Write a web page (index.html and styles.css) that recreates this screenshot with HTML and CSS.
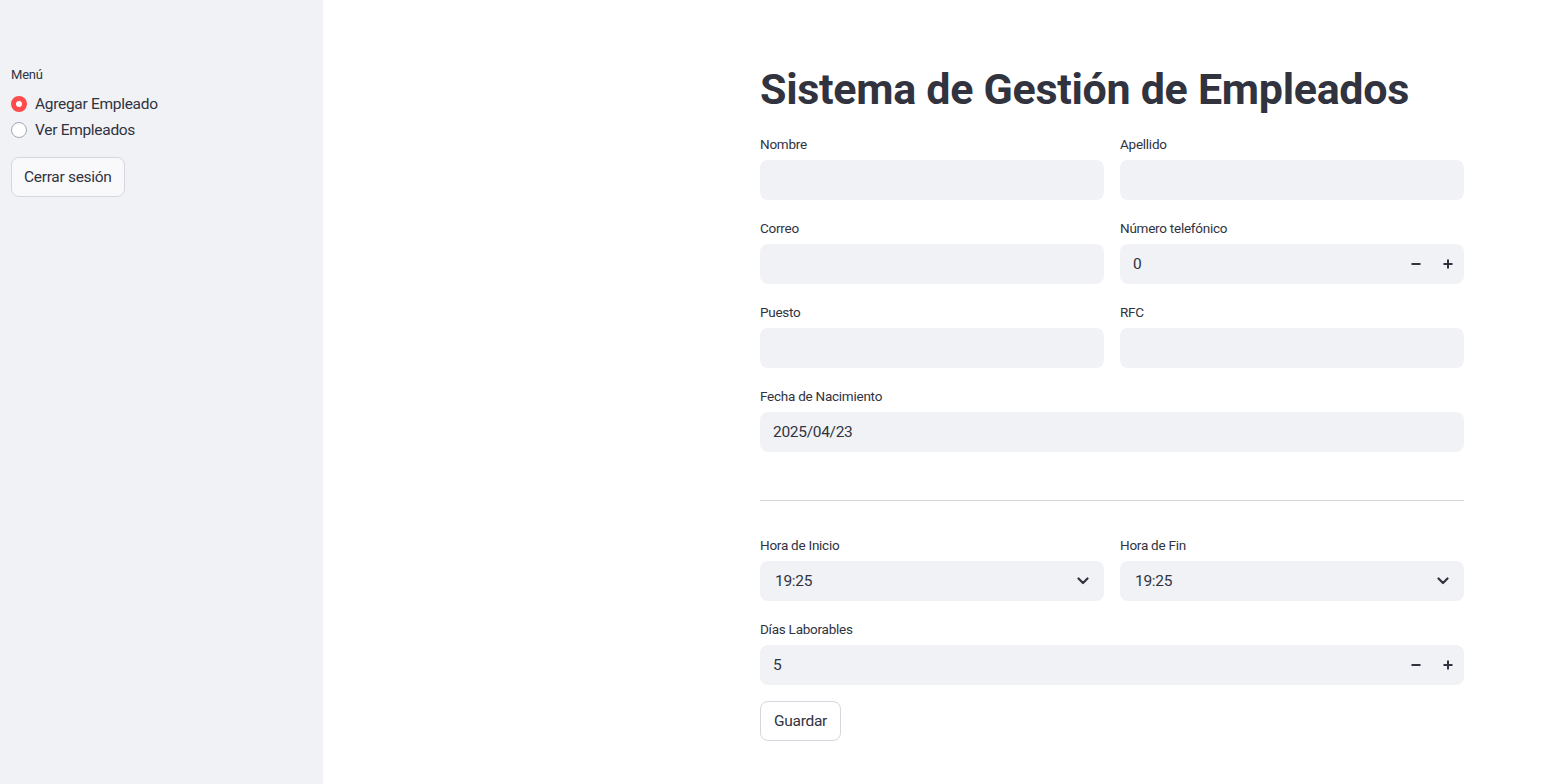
FILE: index.html
```html
<!DOCTYPE html>
<html lang="es">
<head>
<meta charset="utf-8">
<title>Sistema de Gestión de Empleados</title>
<link rel="stylesheet" href="styles.css">
</head>
<body>
<div class="app">
  <aside class="sidebar">
    <div class="side-label">Menú</div>
    <div class="radio-group">
      <div class="radio"><span class="dot on"></span><span>Agregar Empleado</span></div>
      <div class="radio"><span class="dot"></span><span>Ver Empleados</span></div>
    </div>
    <button class="btn side-btn">Cerrar sesión</button>
  </aside>
  <main class="main">
    <div class="content">
      <h1 class="title">Sistema de Gestión de Empleados</h1>
      <div class="row two">
        <div class="field"><label class="lbl">Nombre</label><div class="input"></div></div>
        <div class="field"><label class="lbl">Apellido</label><div class="input"></div></div>
      </div>
      <div class="row two">
        <div class="field"><label class="lbl">Correo</label><div class="input"></div></div>
        <div class="field"><label class="lbl">Número telefónico</label>
          <div class="input num"><span class="val">0</span><span class="step">
            <svg width="10" height="10" viewBox="0 0 10 10"><rect x="0.5" y="4" width="9" height="2" fill="#31333f"/></svg></span><span class="step">
            <svg width="10" height="10" viewBox="0 0 10 10"><rect x="0.5" y="4" width="9" height="2" fill="#31333f"/><rect x="4" y="0.5" width="2" height="9" fill="#31333f"/></svg></span></div>
        </div>
      </div>
      <div class="row two">
        <div class="field"><label class="lbl">Puesto</label><div class="input"></div></div>
        <div class="field"><label class="lbl">RFC</label><div class="input"></div></div>
      </div>
      <div class="row">
        <div class="field"><label class="lbl">Fecha de Nacimiento</label><div class="input"><span class="val">2025/04/23</span></div></div>
      </div>
      <hr class="divider">
      <div class="row two">
        <div class="field"><label class="lbl">Hora de Inicio</label>
          <div class="input select"><span class="val">19:25</span>
            <svg class="chev" width="12" height="8" viewBox="0 0 12 8"><path d="M1.5 1.5 L6 6 L10.5 1.5" fill="none" stroke="#31333f" stroke-width="2.2" stroke-linecap="round" stroke-linejoin="round"/></svg></div></div>
        <div class="field"><label class="lbl">Hora de Fin</label>
          <div class="input select"><span class="val">19:25</span>
            <svg class="chev" width="12" height="8" viewBox="0 0 12 8"><path d="M1.5 1.5 L6 6 L10.5 1.5" fill="none" stroke="#31333f" stroke-width="2.2" stroke-linecap="round" stroke-linejoin="round"/></svg></div></div>
      </div>
      <div class="row">
        <div class="field"><label class="lbl">Días Laborables</label>
          <div class="input num"><span class="val">5</span><span class="step">
            <svg width="10" height="10" viewBox="0 0 10 10"><rect x="0.5" y="4" width="9" height="2" fill="#31333f"/></svg></span><span class="step">
            <svg width="10" height="10" viewBox="0 0 10 10"><rect x="0.5" y="4" width="9" height="2" fill="#31333f"/><rect x="4" y="0.5" width="2" height="9" fill="#31333f"/></svg></span></div>
        </div>
      </div>
      <button class="btn save-btn">Guardar</button>
    </div>
  </main>
</div>
</body>
</html>
```
FILE: styles.css
```css
* { box-sizing: border-box; }
html, body { margin: 0; padding: 0; }
body {
  font-family: "Roboto", "Noto Sans", sans-serif;
  color: #31333f;
  background: #ffffff;
}
.app {
  display: flex;
  width: 1555px;
  height: 784px;
  overflow: hidden;
}
.sidebar {
  width: 323px;
  flex: 0 0 323px;
  background: #f0f2f6;
  padding: 65px 11px 0 11px;
  display: flex;
  flex-direction: column;
  align-items: flex-start;
}
.side-label {
  font-size: 13px;
  line-height: 20px;
  letter-spacing: -0.2px;
  margin-bottom: 7px;
}
.radio-group {
  display: flex;
  flex-direction: column;
  gap: 2px;
}
.radio {
  display: flex;
  align-items: center;
  gap: 8px;
  height: 24px;
  font-size: 15.5px;
  letter-spacing: -0.3px;
}
.dot {
  width: 16px;
  height: 16px;
  border-radius: 50%;
  background: #ffffff;
  border: 1px solid #a3a8b8;
  flex: 0 0 16px;
}
.dot.on {
  background: #ff4b4b;
  border: 5px solid #ff4b4b;
  position: relative;
}
.dot.on::after {
  content: "";
  position: absolute;
  left: 0; top: 0;
  width: 6px; height: 6px;
  border-radius: 50%;
  background: #ffffff;
}
.btn {
  font-family: inherit;
  color: #31333f;
  font-size: 15.5px;
  letter-spacing: -0.3px;
  height: 40px;
  padding: 0 12px;
  border-radius: 8px;
  border: 1px solid #d5d7de;
  cursor: pointer;
}
.side-btn {
  margin-top: 15px;
  background: #f9f9fb;
}
.main {
  flex: 1;
  padding-left: 437px;
}
.content {
  width: 704px;
  display: flex;
  flex-direction: column;
}
.title {
  margin: 62px 0 16px 0;
  font-size: 43px;
  line-height: 54px;
  font-weight: 700;
  letter-spacing: -0.3px;
  padding: 0;
}
.row {
  display: grid;
  grid-template-columns: 1fr;
  gap: 16px;
  margin-bottom: 16px;
}
.row.two { grid-template-columns: 1fr 1fr; }
.field { display: flex; flex-direction: column; }
.lbl {
  font-size: 13.5px;
  line-height: 24px;
  height: 24px;
  margin-bottom: 4px;
  letter-spacing: -0.25px;
}
.input {
  height: 40px;
  border-radius: 8px;
  background: #f0f2f6;
  display: flex;
  align-items: center;
  padding: 0 13px;
  font-size: 15.5px;
  letter-spacing: -0.3px;
}
.input .val { flex: 1; }
.input.num { padding-right: 0; }
.step {
  width: 32px;
  height: 40px;
  display: flex;
  align-items: center;
  justify-content: center;
}
.input.select { padding: 0 15px; }
.chev { flex: 0 0 auto; }
.divider {
  width: 100%;
  margin: 32px 0 32px 0;
  border: 0;
  border-top: 1px solid #d4d5d9;
  height: 0;
}
.save-btn {
  align-self: flex-start;
  background: #ffffff;
  padding: 0 13px;
}
```
